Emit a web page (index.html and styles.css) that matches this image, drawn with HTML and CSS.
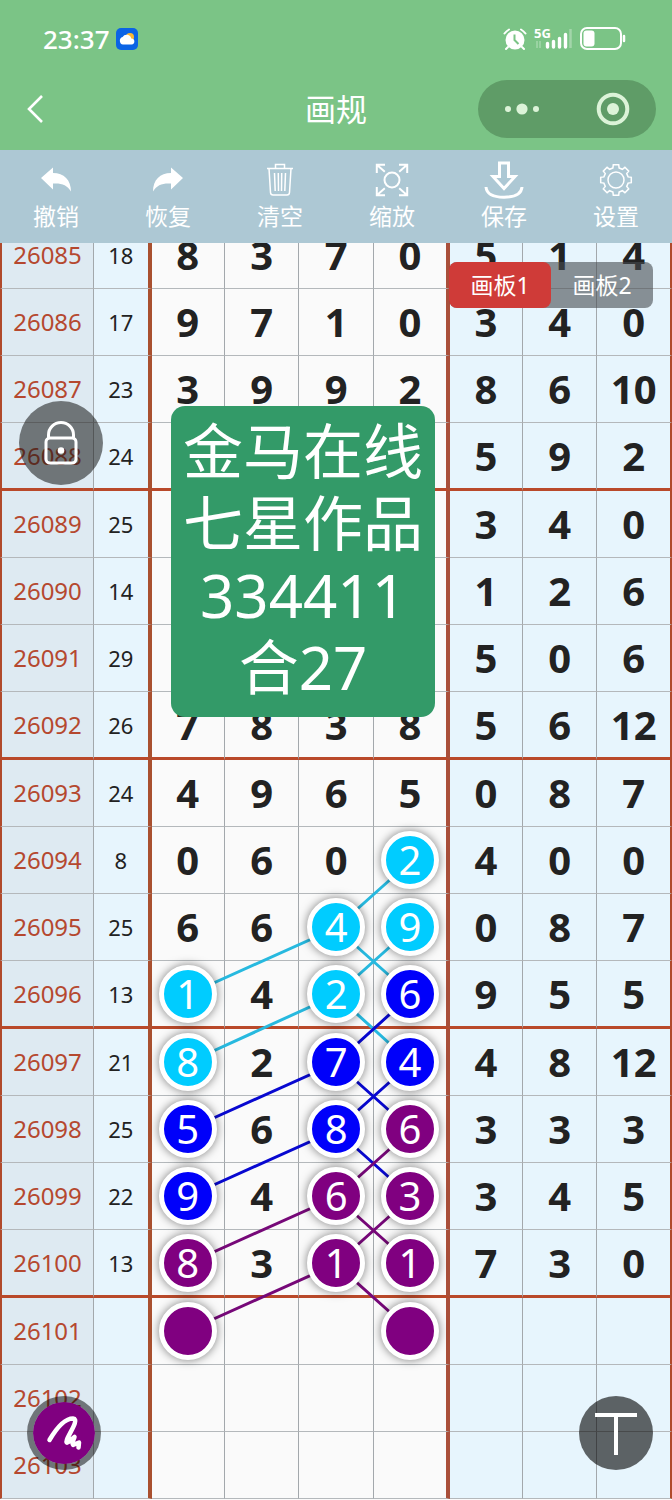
FILE: index.html
```html
<!DOCTYPE html>
<html lang="zh-CN">
<head>
  <meta charset="UTF-8" />
  <meta name="viewport" content="width=device-width, initial-scale=1.0"/>
  <title>画规</title>
  <link rel="stylesheet" href="styles.css">
</head>
<body>
  <header class="top">
    <div class="status">
      <span class="time">23:37</span>
      <svg class="weather" viewBox="0 0 22 22">
        <rect width="22" height="22" rx="5" fill="#0b63e5"/>
        <circle cx="14" cy="9" r="4" fill="#fdb733"/>
        <path d="M7 16.500a3.800 3.800 0 0 1-.4-7.400 4.600 4.600 0 0 1 8.600 1.400A3 3 0 0 1 15.500 16.500z" fill="#fff"/>
      </svg>
      <div class="signals">
        <svg width="24" height="24" viewBox="0 0 24 24">
          <circle cx="12" cy="13" r="9.500" fill="#fff"/>
          <path d="M1.500 6.500a14 14 0 0 1 4.500-4M22.500 6.500a14 14 0 0 0-4.500-4M5 20l-2 2M19 20l2 2" stroke="#fff" stroke-width="2" fill="none" stroke-linecap="round"/>
          <path d="M11.500 7.500V13l4 4" stroke="#7bc486" stroke-width="2" fill="none"/>
        </svg>
        <svg class="cell" width="40" height="24" viewBox="0 0 40 24">
          <text class="net" x="1" y="11">5G</text>
          <path d="M4 14v7M7 14v7" stroke="#b9e2be" stroke-width="1"/>
          <path d="M14.500 16.500V20M20.500 14.500V20M26.500 11.500V20M32.500 7.500V20" stroke="#fff" stroke-width="3.400" stroke-linecap="round"/>
          <path d="M37.500 2V21" stroke="#a3d6aa" stroke-width="2.500"/>
        </svg>
        <svg width="48" height="26" viewBox="0 0 48 26">
          <rect x="2" y="2" width="40" height="21" rx="6" fill="none" stroke="#fff" stroke-width="2"/>
          <rect x="4.500" y="4.500" width="11" height="16" rx="3" fill="#fff"/>
          <path d="M45 10v5" stroke="#fff" stroke-width="2.500" stroke-linecap="round"/>
        </svg>
      </div>
    </div>

    <div class="nav">
      <button class="back" aria-label="返回">
        <svg width="20" height="32" viewBox="0 0 20 32"><path d="M16 3L3 16l13 13" fill="none" stroke="#fff" stroke-width="2.600"/></svg>
      </button>
      <h1>画规</h1>
      <div class="capsule">
        <button aria-label="更多">
          <svg width="40" height="36" viewBox="0 0 40 36" fill="#dcf3d8"><circle cx="6" cy="18" r="3"/><circle cx="20" cy="18" r="5.600"/><circle cx="34" cy="18" r="3"/></svg>
        </button>
        <button aria-label="关闭">
          <svg width="36" height="36" viewBox="0 0 36 36"><circle cx="18" cy="18" r="14.300" fill="none" stroke="#dcf3d8" stroke-width="4"/><circle cx="18" cy="18" r="6" fill="#dcf3d8"/></svg>
        </button>
      </div>
    </div>

    <div class="toolbar">
      <button>
        <svg viewBox="0 0 40 40"><path d="M5 18L17 7.500V13C28 13 35 20 35 31.500 31 25 26 23 17 23.500V29.500z" fill="#fff"/></svg>
        撤销
      </button>
      <button>
        <svg viewBox="0 0 40 40"><path d="M35 18L23 7.500V13C12 13 5 20 5 31.500 9 25 14 23 23 23.500V29.500z" fill="#fff"/></svg>
        恢复
      </button>
      <button>
        <svg viewBox="0 0 40 40" class="line"><path d="M7 8.500h26M15.500 8.500V4.500h9v4M9 8.500l1.500 24q.2 2.500 2.500 2.500h14q2.300 0 2.500-2.500L31 8.500M14.500 13l.7 18M18.300 13l.2 18M21.700 13l-.2 18M25.500 13l-.7 18"/></svg>
        清空
      </button>
      <button>
        <svg viewBox="0 0 40 40" class="line mid"><circle cx="20" cy="20" r="7.500"/><path d="M4.800 13V4.800H13M4.800 4.800l8 7M27 4.800h8.200V13M35.200 4.800l-8 7M4.800 27v8.200H13M4.800 35.200l8-7M35.200 27v8.200H27M35.200 35.200l-8-7"/></svg>
        缩放
      </button>
      <button>
        <svg viewBox="0 0 40 40" class="line thick"><path d="M15.500 3h9v13.500h6.500L20 28.500 9 16.500h6.500zM2 27c.5 6 6 10.200 18 10.200S37.500 33 38 27"/></svg>
        保存
      </button>
      <button>
        <svg viewBox="0 0 40 40" class="line"><circle cx="20" cy="20" r="8"/><path d="M16.900 7.900L17.300 4.700 22.700 4.700 23.100 7.900 26.400 9.300 28.900 7.300 32.700 11.100 30.700 13.600 32.100 16.900 35.300 17.300 35.300 22.700 32.100 23.100 30.700 26.400 32.700 28.900 28.900 32.700 26.400 30.700 23.100 32.100 22.700 35.300 17.300 35.300 16.900 32.100 13.600 30.700 11.100 32.700 7.300 28.900 9.300 26.400 7.900 23.100 4.700 22.700 4.700 17.300 7.900 16.900 9.300 13.600 7.300 11.100 11.100 7.300 13.600 9.300z"/></svg>
        设置
      </button>
    </div>
  </header>

  <main class="board">
    <table>
      <colgroup>
        <col class="c-no"><col class="c-sum">
        <col class="c-first"><col class="c-num"><col class="c-num"><col class="c-last">
        <col class="c-first"><col class="c-num"><col class="c-num">
      </colgroup>
      <tbody>
        <tr><th scope="row">26085</th><td>18</td><td>8</td><td>3</td><td>7</td><td>0</td><td>5</td><td>1</td><td>4</td></tr>
        <tr><th scope="row">26086</th><td>17</td><td>9</td><td>7</td><td>1</td><td>0</td><td>3</td><td>4</td><td>0</td></tr>
        <tr><th scope="row">26087</th><td>23</td><td>3</td><td>9</td><td>9</td><td>2</td><td>8</td><td>6</td><td>10</td></tr>
        <tr><th scope="row">26088</th><td>24</td><td></td><td></td><td></td><td></td><td>5</td><td>9</td><td>2</td></tr>
        <tr><th scope="row">26089</th><td>25</td><td></td><td></td><td></td><td></td><td>3</td><td>4</td><td>0</td></tr>
        <tr><th scope="row">26090</th><td>14</td><td></td><td></td><td></td><td></td><td>1</td><td>2</td><td>6</td></tr>
        <tr><th scope="row">26091</th><td>29</td><td></td><td></td><td></td><td></td><td>5</td><td>0</td><td>6</td></tr>
        <tr><th scope="row">26092</th><td>26</td><td>7</td><td>8</td><td>3</td><td>8</td><td>5</td><td>6</td><td>12</td></tr>
        <tr><th scope="row">26093</th><td>24</td><td>4</td><td>9</td><td>6</td><td>5</td><td>0</td><td>8</td><td>7</td></tr>
        <tr><th scope="row">26094</th><td>8</td><td>0</td><td>6</td><td>0</td><td><span class="dot cyan">2</span></td><td>4</td><td>0</td><td>0</td></tr>
        <tr><th scope="row">26095</th><td>25</td><td>6</td><td>6</td><td><span class="dot cyan">4</span></td><td><span class="dot cyan">9</span></td><td>0</td><td>8</td><td>7</td></tr>
        <tr><th scope="row">26096</th><td>13</td><td><span class="dot cyan">1</span></td><td>4</td><td><span class="dot cyan">2</span></td><td><span class="dot blue">6</span></td><td>9</td><td>5</td><td>5</td></tr>
        <tr><th scope="row">26097</th><td>21</td><td><span class="dot cyan">8</span></td><td>2</td><td><span class="dot blue">7</span></td><td><span class="dot blue">4</span></td><td>4</td><td>8</td><td>12</td></tr>
        <tr><th scope="row">26098</th><td>25</td><td><span class="dot blue">5</span></td><td>6</td><td><span class="dot blue">8</span></td><td><span class="dot purple">6</span></td><td>3</td><td>3</td><td>3</td></tr>
        <tr><th scope="row">26099</th><td>22</td><td><span class="dot blue">9</span></td><td>4</td><td><span class="dot purple">6</span></td><td><span class="dot purple">3</span></td><td>3</td><td>4</td><td>5</td></tr>
        <tr><th scope="row">26100</th><td>13</td><td><span class="dot purple">8</span></td><td>3</td><td><span class="dot purple">1</span></td><td><span class="dot purple">1</span></td><td>7</td><td>3</td><td>0</td></tr>
        <tr><th scope="row">26101</th><td></td><td><span class="dot purple"></span></td><td></td><td></td><td><span class="dot purple"></span></td><td></td><td></td><td></td></tr>
        <tr><th scope="row">26102</th><td></td><td></td><td></td><td></td><td></td><td></td><td></td><td></td></tr>
        <tr><th scope="row">26103</th><td></td><td></td><td></td><td></td><td></td><td></td><td></td><td></td></tr>
      </tbody>
    </table>

    <svg class="links" viewBox="0 0 672 1277" preserveAspectRatio="none">
      <g stroke="#27b9df">
        <path d="M187 773L336 706L411 639M336 706L411 773"/>
        <path d="M187 841L336 773L411 706M336 773L411 841"/>
      </g>
      <g stroke="#0808d0">
        <path d="M187 908L336 841L411 773M336 841L411 908"/>
        <path d="M187 975L336 908L411 841M336 908L411 975"/>
      </g>
      <g stroke="#760878">
        <path d="M187 1042L336 975L411 908M336 975L411 1042"/>
        <path d="M187 1109L336 1042L411 975M336 1042L411 1109"/>
      </g>
    </svg>

    <div class="tabs">
      <button class="active">画板1</button>
      <button>画板2</button>
    </div>

    <div class="note">金马在线<br>七星作品<br>334411<br>合27</div>

    <button class="float lock" aria-label="锁定">
      <svg width="36" height="46" viewBox="0 0 36 46" fill="none" stroke="#fff" stroke-width="3">
        <rect x="3" y="18" width="30" height="25" rx="4"/>
        <path d="M5.500 18v-3a12.500 12.500 0 0 1 25 0v3"/>
        <circle cx="18" cy="30.500" r="3.300" fill="#fff" stroke="none"/>
      </svg>
    </button>
  </main>

  <button class="float pen" aria-label="画笔">
    <svg width="62" height="62" viewBox="0 0 62 62">
      <path d="M16.500 38C23 27 32 16.500 40 16.500C46.500 17 37 30 34 37.500Q32.500 42 35.500 40L41.500 35Q38.500 42 40 43L46 40.500 45.500 45.500" fill="none" stroke="#fff" stroke-width="4.500" stroke-linecap="round" stroke-linejoin="round"/>
    </svg>
  </button>
  <button class="float type" aria-label="文字">
    <svg width="44" height="44" viewBox="0 0 44 44"><path d="M1 4h42M22 4v40" fill="none" stroke="#fff" stroke-width="4"/></svg>
  </button>
</body>
</html>
```

FILE: styles.css
```css
* { box-sizing: border-box; }

body {
  margin: 0;
  font-family: "Noto Sans", "Noto Sans CJK SC", sans-serif;
  background: #fafafa;
  color: #222;
}

button {
  border: none;
  padding: 0;
  background: none;
  color: #fff;
  font: inherit;
  cursor: pointer;
}

svg { display: block; }

/* header */
.top {
  position: relative;
  z-index: 5;
  background: #7bc486;
  color: #fff;
}

.status {
  display: flex;
  align-items: center;
  height: 80px;
  padding: 0 45px 2px 43px;
  font-size: 26px;
  font-weight: 500;
}

.weather {
  width: 22px;
  height: 22px;
  margin-left: 6px;
}

.signals {
  display: flex;
  align-items: center;
  gap: 6px;
  margin-left: auto;
}

.cell { overflow: visible; }

.net {
  font-size: 13px;
  font-weight: 700;
  fill: #fff;
}

.nav {
  display: grid;
  grid-template-columns: 1fr auto 1fr;
  align-items: center;
  height: 70px;
  padding: 0 16px 12px;
}

.nav h1 {
  margin: 0;
  font-size: 31px;
  font-weight: 400;
  line-height: 40px;
}

.back {
  justify-self: start;
  margin-left: 10px;
}

.capsule {
  display: flex;
  justify-content: space-between;
  align-items: center;
  justify-self: end;
  width: 178px;
  height: 58px;
  padding: 0 25px 0 24px;
  border-radius: 29px;
  background: #5f9c67;
}

.toolbar {
  display: grid;
  grid-template-columns: repeat(6, 1fr);
  height: 93px;
  padding-top: 10px;
  background: #adc8d4;
}

.toolbar button {
  display: flex;
  flex-direction: column;
  align-items: center;
  height: 72px;
  font-size: 23px;
  line-height: 32px;
}

.toolbar svg {
  width: 40px;
  height: 40px;
}

.line {
  fill: none;
  stroke: #fff;
  stroke-width: 1.5;
}

.line.mid { stroke-width: 2; }
.line.thick { stroke-width: 3; }

/* number board */
.board {
  position: relative;
  margin-top: -21px;
}

table {
  width: 100%;
  table-layout: fixed;
  border-collapse: separate;
  border-spacing: 0;
}

.c-no { width: 14%; }
.c-sum { width: 8.6%; }
.c-first { width: 10.9%; }
.c-num { width: 11.1%; }
.c-last { width: 11.3%; }

th, td {
  height: 67px;
  padding: 0;
  border-right: 1px solid #a3a8ac;
  border-bottom: 1px solid #b4b8bb;
  background: #e7f5fd;
  text-align: center;
  vertical-align: middle;
  font-size: 40px;
  font-weight: 700;
  line-height: 58px;
}

th {
  border-left: 2px solid #b04a2c;
  background: #deeaf2;
  color: #b5482f;
  font-size: 24px;
  font-weight: 400;
}

td:nth-child(2) {
  border-right: 4px solid #a9502f;
  font-size: 22px;
  font-weight: 400;
}

td:nth-child(n+3):nth-child(-n+6) { background: #fafafa; }
td:nth-child(6) { border-right: 4px solid #a94f3a; }
td:nth-child(9) { border-right: 2px solid #b04a2c; }

tr:nth-child(4n) > * {
  height: 68px;
  border-bottom: 3px solid #b9492a;
}

.links {
  position: absolute;
  top: 0;
  left: 0;
  width: 100%;
  height: 100%;
  fill: none;
  stroke-width: 3;
}

.dot {
  position: relative;
  z-index: 2;
  display: block;
  width: 58px;
  height: 58px;
  margin: 0 auto;
  border: 5px solid #fff;
  border-radius: 50%;
  box-shadow: 0 0 10px rgba(0, 0, 0, 0.5);
  color: #fff;
  font-weight: 400;
  line-height: 48px;
}

.cyan { background: #00ccff; }
.blue { background: #0000fa; }
.purple { background: #800080; }

/* things lying over the board */
.tabs {
  position: absolute;
  z-index: 3;
  top: 40px;
  right: 19px;
  display: flex;
  border-radius: 8px;
  background: rgba(70, 75, 80, 0.6);
}

.tabs button {
  width: 102px;
  height: 46px;
  border-radius: 8px;
  font-size: 23px;
  line-height: 44px;
}

.tabs .active { background: #cf3b38; }

.note {
  position: absolute;
  z-index: 3;
  top: 184px;
  left: 171px;
  padding: 9px 12px 14px;
  border-radius: 14px;
  background: #339a68;
  color: #fff;
  font-size: 60px;
  line-height: 72px;
  text-align: center;
}

.float {
  display: flex;
  align-items: center;
  justify-content: center;
  border-radius: 50%;
  z-index: 4;
}

.lock {
  position: absolute;
  top: 179px;
  left: 19px;
  width: 84px;
  height: 84px;
  background: rgba(20, 20, 20, 0.55);
}

.pen,
.type {
  position: fixed;
  bottom: 30px;
  width: 74px;
  height: 74px;
}

.pen {
  left: 27px;
  border: 6px solid rgba(0, 0, 0, 0.5);
  background: #800080;
  background-clip: padding-box;
}

.type {
  right: 19px;
  background: rgba(0, 0, 0, 0.6);
}
```
